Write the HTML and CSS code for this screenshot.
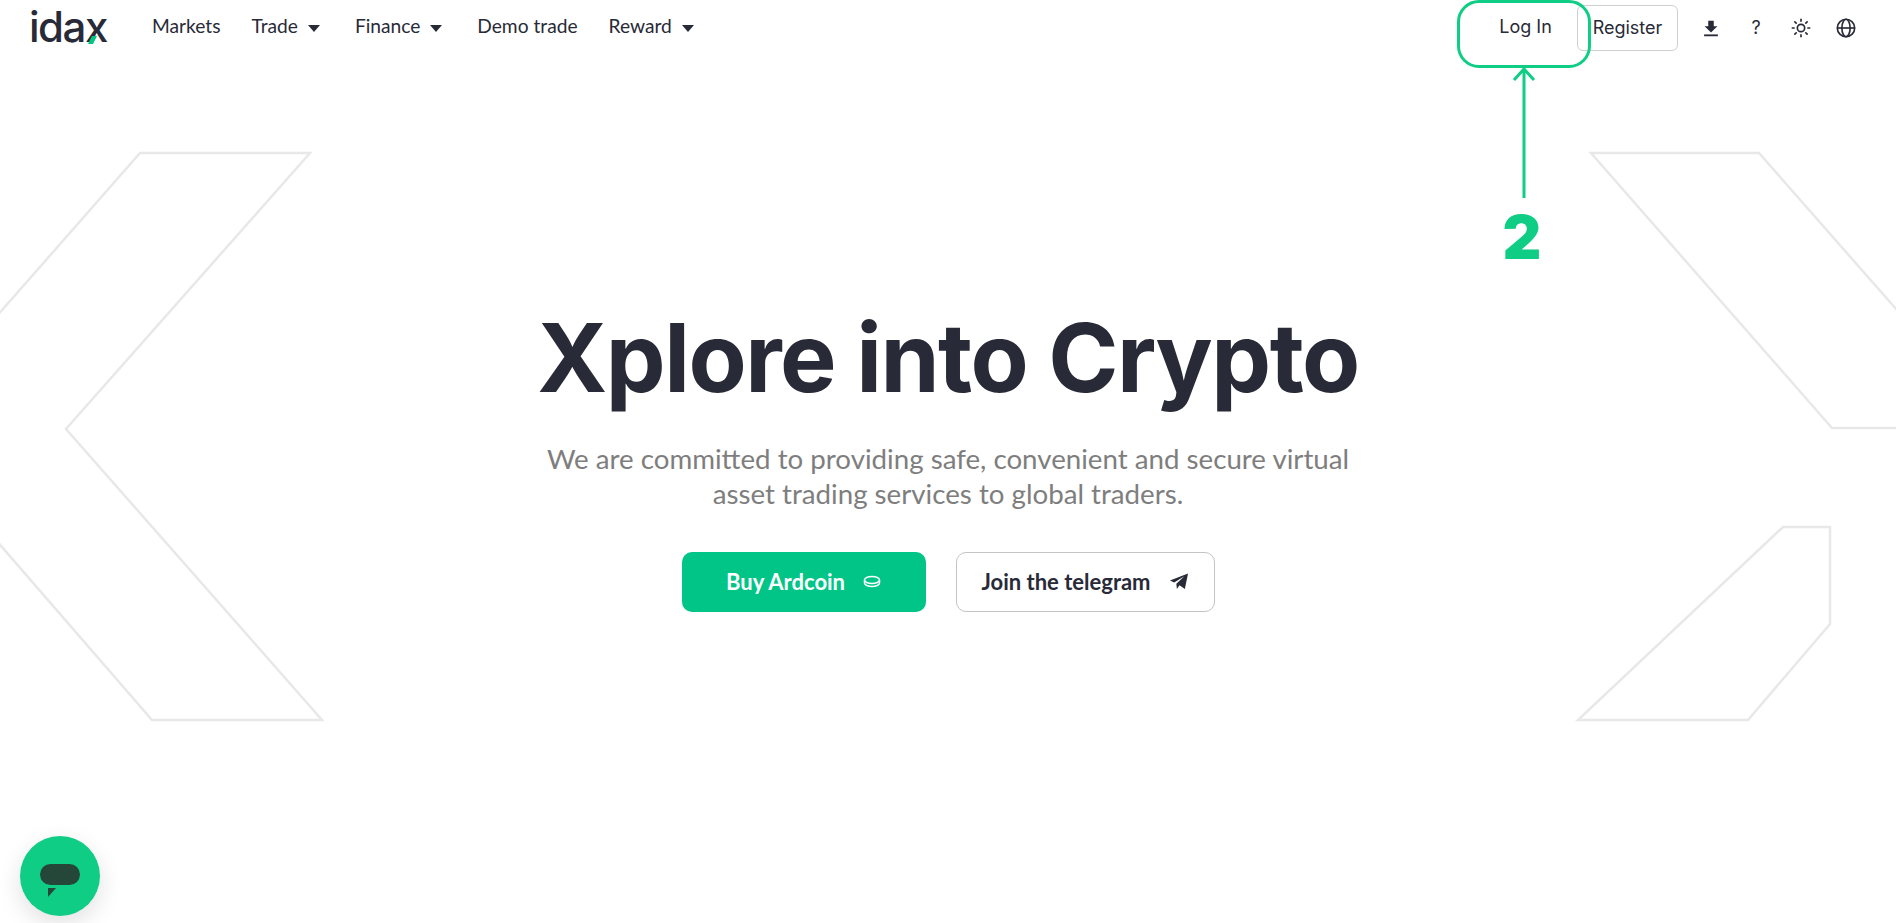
FILE: index.html
```html
<!DOCTYPE html>
<html lang="en">
<head>
  <meta charset="UTF-8" />
  <meta name="viewport" content="width=device-width, initial-scale=1.0"/>
  <title>idax</title>
  <link rel="stylesheet" href="styles.css">
</head>
<body>

  <svg class="bg-shapes" viewBox="0 0 1896 923" aria-hidden="true">
    <polygon points="140,153 310,153 66,429 322,720 152,720 -90,441 -90,415"/>
    <polygon points="1591,153 1759,153 1990,416 1990,428 1832,428"/>
    <polygon points="1783,527 1830,527 1830,624 1748,720 1578,720"/>
  </svg>

  <header class="top-bar">
    <a class="logo">idax<svg class="logo-mark" viewBox="0 0 10 8"><path d="M0 8 L4 0 L9 0 L5 8 Z"/></svg></a>
    <nav class="main-nav">
      <a>Markets</a>
      <a>Trade <i class="caret"></i></a>
      <a>Finance <i class="caret"></i></a>
      <a>Demo trade</a>
      <a>Reward <i class="caret"></i></a>
    </nav>
    <div class="actions">
      <a class="login">Log In</a>
      <a class="register">Register</a>
      <div class="tools">
        <svg class="tool" viewBox="0 0 24 24"><path d="M9 4h6v6h4l-7 7-7-7h4z" fill="currentColor"/><rect x="4.500" y="19" width="15" height="2" fill="currentColor"/></svg>
        <span class="tool tool-help">?</span>
        <svg class="tool" viewBox="0 0 24 24" fill="none" stroke="currentColor" stroke-width="1.800" stroke-linecap="round"><circle cx="12" cy="12" r="4"/><path d="M12 2.500v2M12 19.500v2M2.500 12h2M19.500 12h2M5.300 5.300l1.400 1.400M17.300 17.300l1.400 1.400M5.300 18.700l1.400-1.400M17.300 6.700l1.400-1.400"/></svg>
        <svg class="tool" viewBox="0 0 24 24" fill="none" stroke="currentColor" stroke-width="1.800"><circle cx="12" cy="12" r="9.500"/><ellipse cx="12" cy="12" rx="4.500" ry="9.500"/><path d="M2.500 12h19"/></svg>
      </div>
    </div>
  </header>

  <main class="hero">
    <h1>Xplore into Crypto</h1>
    <p>We are committed to providing safe, convenient and secure virtual<br>asset trading services to global traders.</p>
    <div class="hero-btns">
      <a class="btn btn-green">Buy Ardcoin
        <svg class="btn-icon" viewBox="0 0 18 12" fill="none" stroke="currentColor" stroke-width="1.500"><ellipse cx="9" cy="4.500" rx="7.500" ry="3.500"/><path d="M1.500 4.500v3c0 2 3.400 3.500 7.500 3.500s7.500-1.500 7.500-3.500v-3"/></svg>
      </a>
      <a class="btn btn-outline">Join the telegram
        <svg class="btn-icon btn-icon-plane" viewBox="0 0 18 16"><path d="M17.500 0.500 L14.500 15 L9.500 11.500 L7 15 L6.500 10 L14 3 L4.500 9 L0.500 7 Z" fill="currentColor"/></svg>
      </a>
    </div>
  </main>

  <!-- annotation drawn over the page -->
  <div class="note-box"></div>
  <svg class="note-arrow" viewBox="0 0 24 132" fill="none" stroke="#10cd85" stroke-width="3"><path d="M12 2V132M2 14L12 3L22 14"/></svg>
  <div class="note-num">2</div>

  <div class="chat-btn">
    <span class="chat-pill"></span>
    <svg class="chat-tail" viewBox="0 0 8 9"><path d="M0 0H8L0 9Z" fill="#24473a"/></svg>
  </div>

</body>
</html>
```

FILE: styles.css
```css
:root {
  --dark: #282a37;
  --green: #00c587;
  --note: #10cd85;
}

* {
  box-sizing: border-box;
}

html, body {
  height: 100%;
}

body {
  margin: 0;
  background: #fff;
  color: var(--dark);
  font-family: 'Lato', sans-serif;
  overflow: hidden;
  position: relative;
}

.bg-shapes {
  position: absolute;
  left: 0;
  top: 0;
  width: 1896px;
  height: 923px;
}

.bg-shapes polygon {
  fill: none;
  stroke: #e8e8e8;
  stroke-width: 2.500;
}

.top-bar {
  position: relative;
  display: flex;
  align-items: flex-start;
  height: 54px;
  padding: 5px 39px 0 29px;
}

.logo {
  position: relative;
  font-family: 'Inter', sans-serif;
  font-size: 42px;
  font-weight: 500;
  line-height: 44px;
  letter-spacing: -1.500px;
  width: 123px;
}

.logo-mark {
  position: absolute;
  left: 59px;
  top: 31px;
  width: 10px;
  height: 8px;
  fill: var(--green);
}

.main-nav {
  display: flex;
  gap: 31px;
  font-size: 19.200px;
  line-height: 42px;
}

.caret {
  display: inline-block;
  width: 0;
  height: 0;
  margin: 0 4px 0 5px;
  border: 6.500px solid transparent;
  border-top: 7px solid var(--dark);
  border-bottom: 0;
  vertical-align: middle;
}

.actions {
  margin-left: auto;
  display: flex;
  align-items: flex-start;
  font-family: 'Inter', sans-serif;
  font-size: 18px;
  line-height: 44px;
}

.login {
  width: 103px;
  text-align: center;
}

.register {
  width: 101px;
  height: 46px;
  text-align: center;
  border: 1px solid #cfcfd3;
  border-radius: 6px;
}

.tools {
  display: flex;
  align-items: center;
  gap: 23px;
  height: 46px;
  margin-left: 22px;
}

.tool {
  width: 22px;
  height: 22px;
  color: var(--dark);
}

.tool-help {
  text-align: center;
  font-size: 18px;
  line-height: 22px;
}

.hero {
  position: relative;
  display: flex;
  flex-direction: column;
  align-items: center;
  text-align: center;
  padding-top: 246px;
}

.hero h1 {
  margin: 0;
  font-family: 'Inter', sans-serif;
  font-size: 95px;
  font-weight: 700;
  line-height: 116px;
  letter-spacing: -1.500px;
}

.hero p {
  margin: 25px 0 0;
  color: #7e7e7e;
  font-size: 27.700px;
  line-height: 35px;
}

.hero-btns {
  display: flex;
  gap: 30px;
  margin-top: 41px;
}

.btn {
  display: flex;
  align-items: center;
  justify-content: center;
  gap: 18px;
  height: 60px;
  padding-bottom: 2px;
  border-radius: 10px;
  font-size: 22px;
  font-weight: 700;
}

.btn-green {
  width: 244px;
  background: var(--green);
  color: #fff;
}

.btn-outline {
  width: 259px;
  border: 1px solid #c4c4c8;
}

.btn-icon {
  width: 18px;
  height: 15px;
}

.btn-icon-plane {
  width: 20px;
  height: 17px;
}

.note-box {
  position: absolute;
  left: 1457px;
  top: 0;
  width: 134px;
  height: 68px;
  border: 3px solid var(--note);
  border-radius: 22px;
}

.note-arrow {
  position: absolute;
  left: 1512px;
  top: 66px;
  width: 24px;
  height: 132px;
}

.note-num {
  position: absolute;
  left: 1490px;
  top: 200px;
  width: 64px;
  text-align: center;
  color: var(--note);
  font-family: 'Inter', sans-serif;
  font-size: 60px;
  font-weight: 900;
  line-height: 75px;
}

.chat-btn {
  position: absolute;
  left: 20px;
  top: 836px;
  width: 80px;
  height: 80px;
  border-radius: 50%;
  background: var(--note);
  box-shadow: 0 8px 24px rgba(0, 0, 0, 0.12);
}

.chat-pill {
  position: absolute;
  left: 20px;
  top: 28px;
  width: 40px;
  height: 21px;
  border-radius: 11px;
  background: #24473a;
}

.chat-tail {
  position: absolute;
  left: 28px;
  top: 52px;
  width: 8px;
  height: 9px;
}
```
